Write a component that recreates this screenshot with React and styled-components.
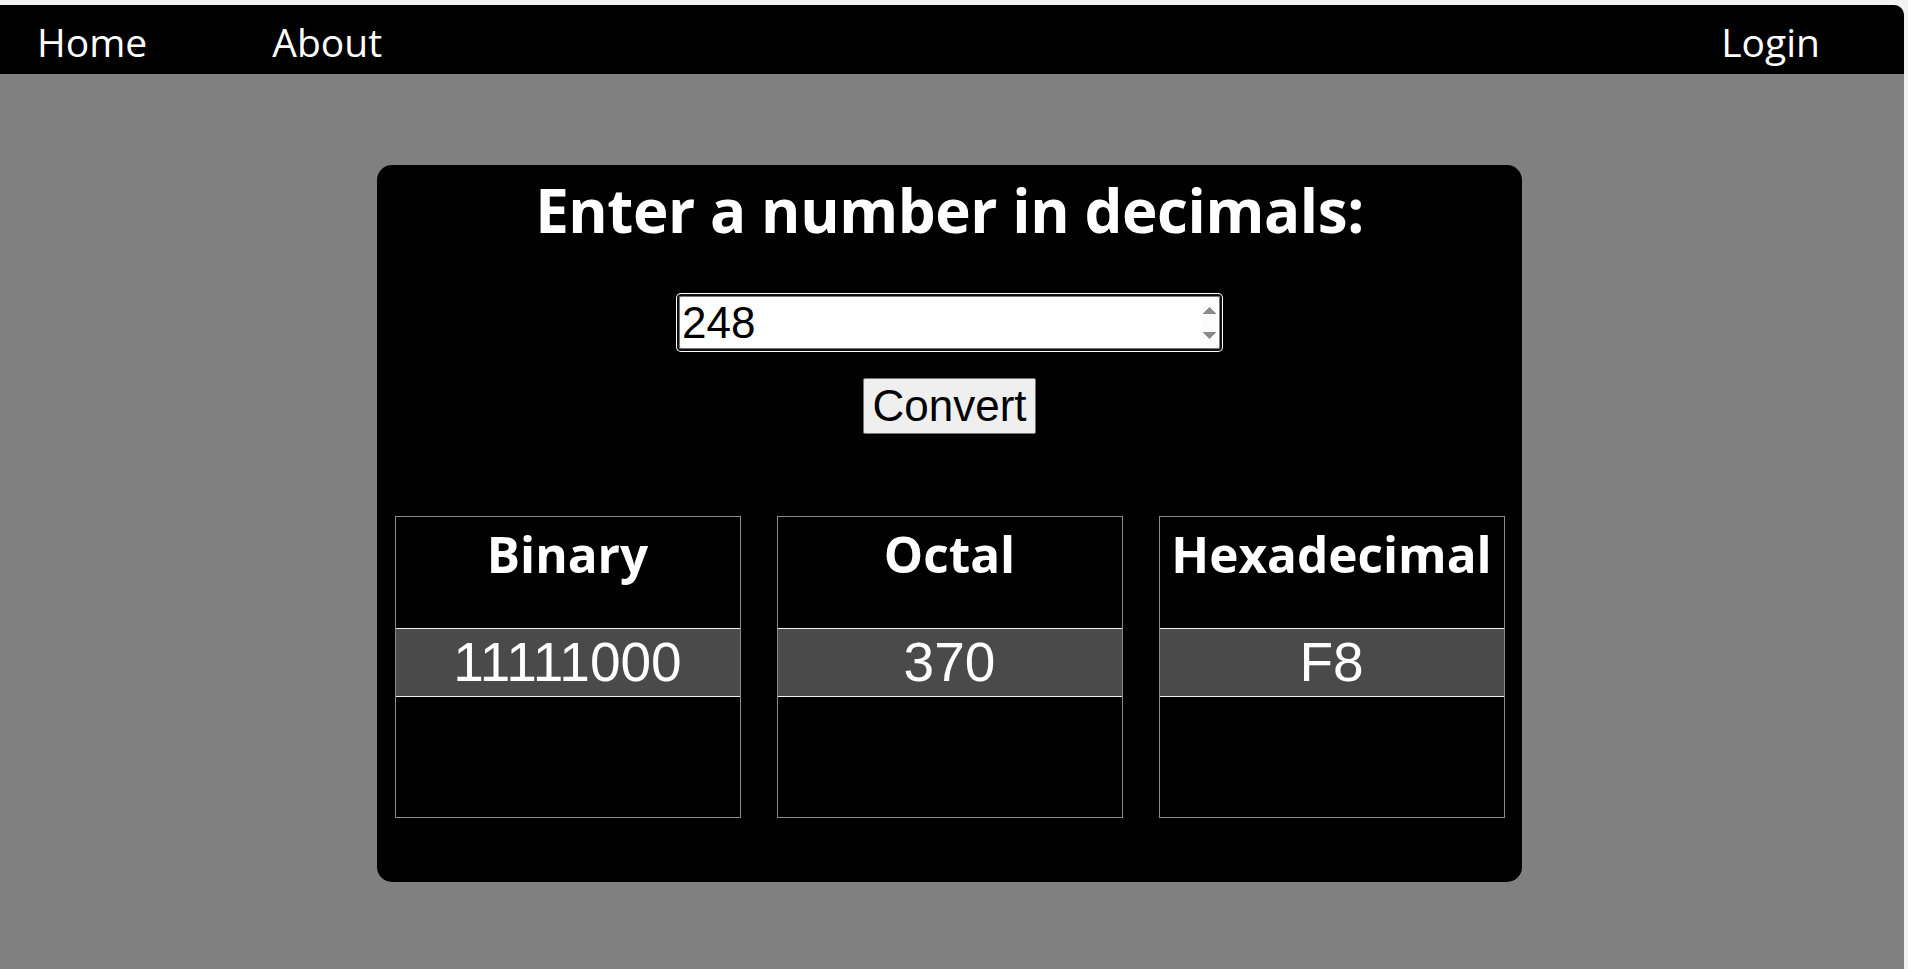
import React from "react";
import styled, { createGlobalStyle } from "styled-components";

const GlobalStyle = createGlobalStyle`
  html, body {
    margin: 0;
    padding: 0;
    background: #f2f2f2;
  }
  * { box-sizing: border-box; }
`;

const Frame = styled.div`
  min-height: 100vh;
  padding: 5px 4px 0 0;
  background: #f2f2f2;
`;

const Page = styled.div`
  min-height: calc(100vh - 5px);
  background: #808080;
  border-top-right-radius: 10px;
  overflow: hidden;
  padding-bottom: 40px;
`;

const NavBar = styled.nav`
  height: 69px;
  background: #000;
  display: flex;
  align-items: center;
  gap: 125px;
  padding: 4px 84px 0 37px;
`;

const NavLink = styled.a`
  color: #fff;
  text-decoration: none;
  font-family: "Open Sans", "Noto Sans", sans-serif;
  font-size: 39px;
  line-height: 53px;
  margin-left: ${(p) => (p.$right ? "auto" : "0")};
  cursor: pointer;
`;

const Main = styled.main`
  padding: 91px 5px 0 0;
`;

const Card = styled.section`
  width: 1145px;
  margin: 0 auto;
  background: #000;
  border-radius: 15px;
  padding: 4px 17px 64px;
  display: flex;
  flex-direction: column;
  align-items: center;
`;

const Heading = styled.h1`
  margin: 0;
  color: #fff;
  font-family: "Open Sans", "Noto Sans", sans-serif;
  font-weight: 700;
  font-size: 60px;
  line-height: 82px;
  letter-spacing: -0.4px;
  text-align: center;
`;

const Form = styled.form`
  margin-top: 45px;
  display: flex;
  flex-direction: column;
  align-items: center;
  gap: 29px;
`;

const NumberInput = styled.input`
  width: 541px;
  height: 53px;
  padding: 0 2px;
  border: 1px solid #767676;
  border-radius: 2px;
  background: #fff;
  color: #000;
  font-family: "Liberation Sans", Arial, sans-serif;
  font-size: 44px;
  outline: 2px solid #101010;
  outline-offset: 0;
  box-shadow: 0 0 0 3px #fff;

  &::-webkit-inner-spin-button,
  &::-webkit-outer-spin-button {
    opacity: 1;
  }
`;

const ConvertButton = styled.button`
  height: 56px;
  padding: 1px 8px;
  background: #efefef;
  color: #000;
  border: 1px solid #767676;
  border-radius: 2px;
  font-family: "Liberation Sans", Arial, sans-serif;
  font-size: 44px;
  cursor: pointer;
`;

const Results = styled.div`
  margin-top: 82px;
  width: 100%;
  display: grid;
  grid-template-columns: repeat(3, 346px);
  justify-content: center;
  gap: 36px;
`;

const ResultBox = styled.div`
  height: 302px;
  border: 1px solid #8a8a8a;
  display: flex;
  flex-direction: column;
`;

const BoxTitle = styled.h2`
  margin: 0;
  height: 111px;
  padding-top: 5px;
  color: #fff;
  font-family: "Open Sans", "Noto Sans", sans-serif;
  font-weight: 700;
  font-size: 49.5px;
  line-height: 65px;
  text-align: center;
  white-space: nowrap;
`;

const ValueRow = styled.div`
  height: 69px;
  padding-top: 2px;
  background: #4a4a4a;
  border-top: 1px solid #f0f0f0;
  border-bottom: 1px solid #f0f0f0;
  color: #fff;
  font-family: "Liberation Sans", Arial, sans-serif;
  font-size: 55px;
  line-height: 62px;
  text-align: center;
`;

const Filler = styled.div`
  flex: 1;
`;

const results = [
  { label: "Binary", value: "11111000" },
  { label: "Octal", value: "370" },
  { label: "Hexadecimal", value: "F8" },
];

export default function App() {
  return (
    <>
      <GlobalStyle />
      <Frame>
        <Page>
          <NavBar>
            <NavLink>Home</NavLink>
            <NavLink>About</NavLink>
            <NavLink $right>Login</NavLink>
          </NavBar>
          <Main>
            <Card>
              <Heading>Enter a number in decimals:</Heading>
              <Form onSubmit={(e) => e.preventDefault()}>
                <NumberInput type="number" defaultValue="248" />
                <ConvertButton type="submit">Convert</ConvertButton>
              </Form>
              <Results>
                {results.map((r) => (
                  <ResultBox key={r.label}>
                    <BoxTitle>{r.label}</BoxTitle>
                    <ValueRow>{r.value}</ValueRow>
                    <Filler />
                  </ResultBox>
                ))}
              </Results>
            </Card>
          </Main>
        </Page>
      </Frame>
    </>
  );
}
